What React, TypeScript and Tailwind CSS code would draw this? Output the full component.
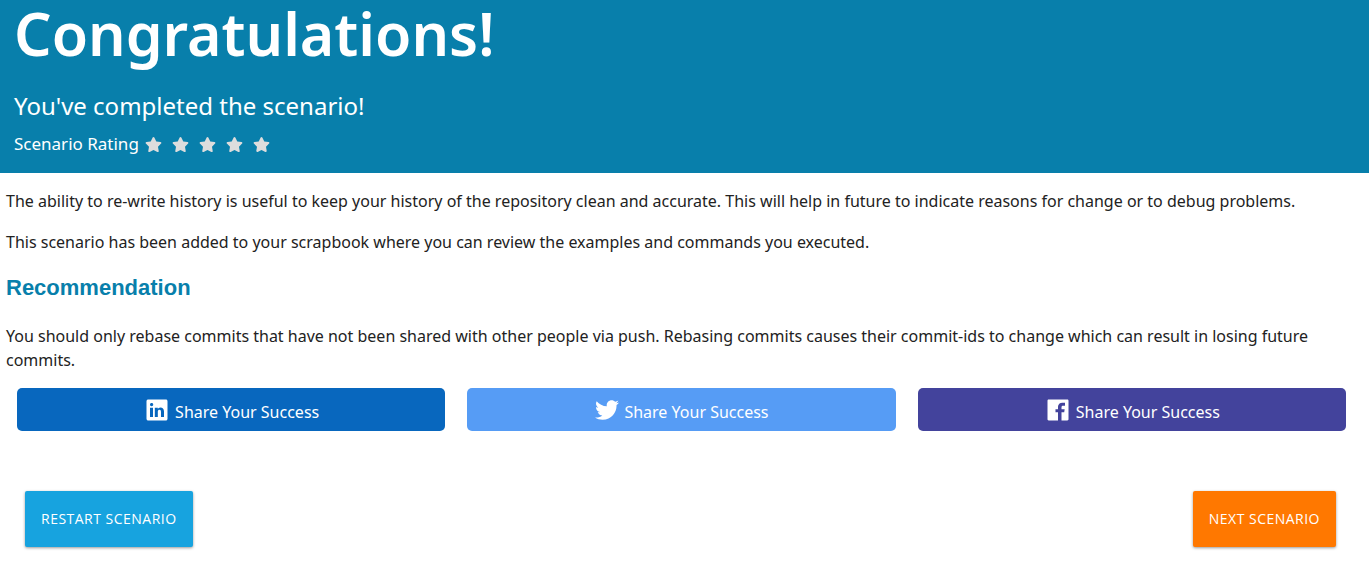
import type { ReactNode } from "react";
import { FaStar } from "react-icons/fa";
import { IoLogoFacebook, IoLogoLinkedin, IoLogoTwitter } from "react-icons/io";

function ShareButton({ color, icon }: { color: string; icon: ReactNode }) {
  return (
    <button
      type="button"
      className={`flex h-[43px] flex-1 items-center justify-center gap-1 rounded-[5px] text-base text-white ${color}`}
    >
      {icon}
      <span className="pt-1">Share Your Success</span>
    </button>
  );
}

export default function App() {
  return (
    <div className="bg-white font-['Noto_Sans',sans-serif] text-[#222222]">
      <header className="bg-[#087fab] px-[14px] pb-[17px] text-white">
        <h1 className="text-[59px] leading-[66px] font-semibold">Congratulations!</h1>
        <h2 className="pt-6 text-2xl leading-8">You've completed the scenario!</h2>
        <div className="flex items-center gap-[6px] pt-[10px]">
          <span className="text-[17px] leading-6">Scenario Rating</span>
          <div className="flex gap-[10px] text-[#dddddd]">
            {[1, 2, 3, 4, 5].map((value) => (
              <button key={value} type="button" aria-label={`Rate ${value} of 5`}>
                <FaStar className="size-[17px]" />
              </button>
            ))}
          </div>
        </div>
      </header>
      <main>
        <div className="px-[6px] pt-4 text-base leading-6">
          <p>
            The ability to re-write history is useful to keep your history of the repository clean and accurate. This
            will help in future to indicate reasons for change or to debug problems.
          </p>
          <p className="pt-[17px]">
            This scenario has been added to your scrapbook where you can review the examples and commands you executed.
          </p>
          <h3 className="pt-[18px] font-['Liberation_Sans',sans-serif] text-[22px] leading-8 font-bold text-[#087fab]">
            Recommendation
          </h3>
          <p className="pt-5">
            You should only rebase commits that have not been shared with other people via push. Rebasing commits causes
            their commit-ids to change which can result in losing future commits.
          </p>
        </div>
        <div className="flex gap-[22px] pt-4 pr-[23px] pl-[17px]">
          <ShareButton color="bg-[#0867be]" icon={<IoLogoLinkedin className="size-7" />} />
          <ShareButton color="bg-[#569cf5]" icon={<IoLogoTwitter className="size-[26px]" />} />
          <ShareButton color="bg-[#43439c]" icon={<IoLogoFacebook className="size-7" />} />
        </div>
        <div className="flex justify-between pt-[60px] pr-[33px] pb-[21px] pl-[25px] font-['Open_Sans',sans-serif] text-sm tracking-[0.035em] text-white">
          <button type="button" className="h-14 rounded-xs bg-[#17a3df] px-4 shadow-[0_1px_3px_rgba(0,0,0,0.4)]">
            RESTART SCENARIO
          </button>
          <button type="button" className="h-14 rounded-xs bg-[#ff7800] px-4 shadow-[0_1px_3px_rgba(0,0,0,0.4)]">
            NEXT SCENARIO
          </button>
        </div>
      </main>
    </div>
  );
}
